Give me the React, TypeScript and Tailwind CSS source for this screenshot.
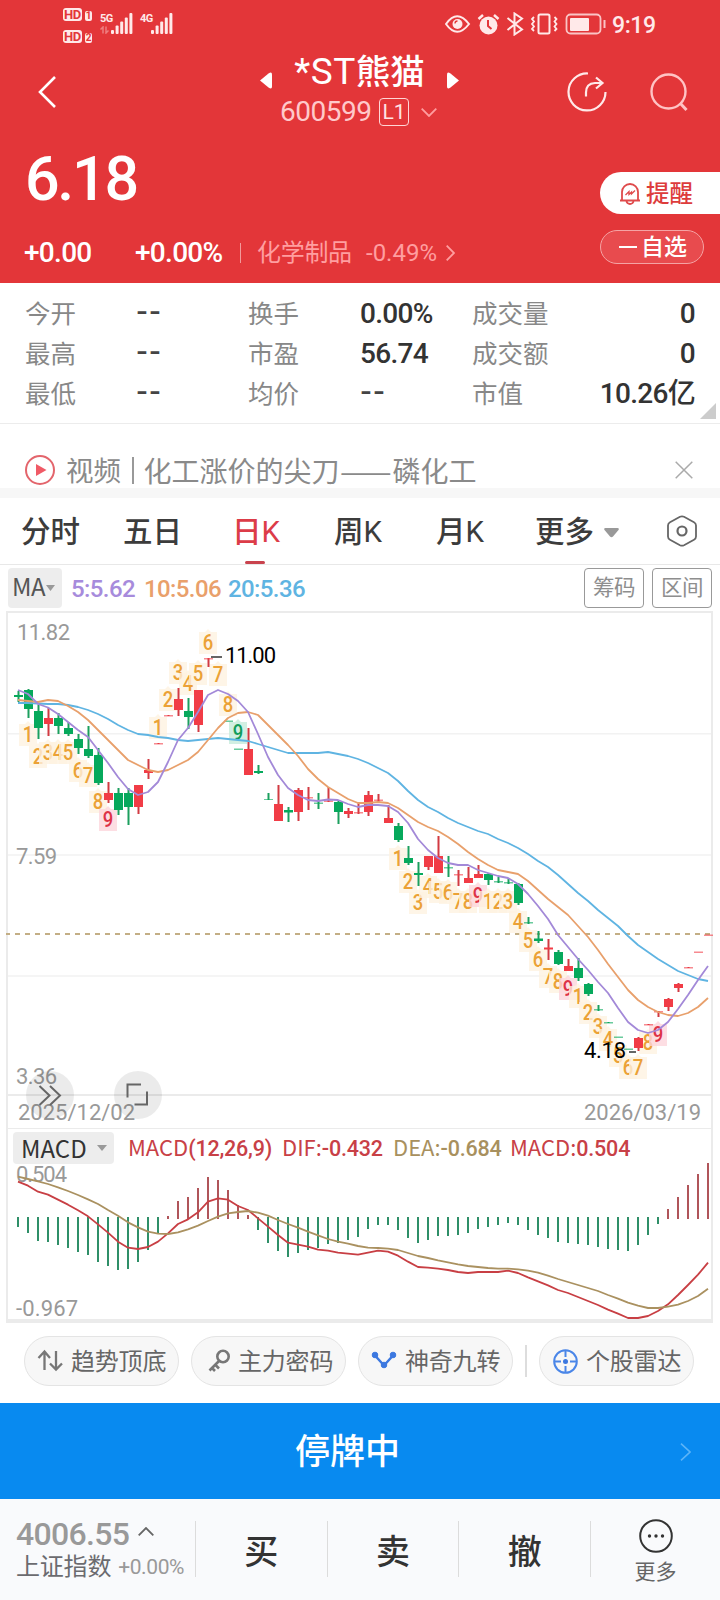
import type { ReactNode } from 'react'

type Candle = ['r' | 'g', number, number, number, number] | null
type Mark = [number, number, number, 'o' | 'r' | 'g']

const RED = '#f13c46'
const GREEN = '#06a95c'

// direction, body top, body bottom, high, low
const candles: Candle[] = [
  ['g', 695, 697, 691, 702], ['g', 690, 709, 689, 718], ['g', 711, 728, 705, 739], ['r', 718, 724, 708, 736],
  ['g', 718, 726, 713, 734], ['g', 728, 734, 722, 736], ['g', 739, 748, 734, 754], ['g', 749, 756, 726, 758],
  ['g', 755, 783, 748, 785], ['r', 793, 800, 782, 803], ['g', 793, 810, 788, 815], ['g', 793, 807, 788, 825],
  ['r', 785, 807, 785, 814], ['r', 770, 773, 759, 779], ['r', 743, 744.5, 743, 744], ['r', 715, 716.5, 715, 716],
  ['r', 699, 710, 688, 716], ['g', 711, 717, 698, 729], ['r', 690, 725, 690, 732], ['r', 658, 659.5, 658, 667],
  null, ['g', 720.5, 722, 721, 721], ['g', 748.5, 750, 749, 749], ['r', 749, 775, 728, 775],
  ['g', 771, 773, 765, 774], ['g', 799, 800, 793, 800], ['r', 804, 821, 785, 821], ['g', 810, 812.5, 807, 822],
  ['r', 790, 812, 788, 821], ['r', 797, 798.5, 787, 810], ['g', 802.5, 804, 793, 809], ['r', 800.5, 802, 787, 802],
  ['g', 802, 812, 801, 824], ['r', 811, 814, 808, 818], ['r', 812, 813.5, 803, 814], ['r', 795, 812, 791, 816],
  ['r', 799.5, 801, 794, 802], ['r', 818, 823, 805, 823], ['g', 826, 840, 823, 842], ['g', 858, 863, 846, 865],
  ['g', 873, 875, 862, 886], ['r', 856, 867, 856, 870], ['r', 856, 873, 836, 873], ['g', 867, 868.5, 856, 877],
  ['r', 874, 875.5, 870, 886], ['r', 878, 883, 867, 883], ['r', 874, 878, 865, 878], ['g', 874, 880, 873, 885],
  ['g', 881, 882.5, 877, 883], ['g', 882, 883.5, 878, 884], ['g', 884, 903, 883, 905], ['g', 922, 923.5, 917, 924],
  ['g', 938.5, 941, 931, 943], ['r', 947.5, 949.5, 939, 960], ['g', 952, 964, 950, 965], ['r', 966, 971, 959, 971],
  ['g', 968, 978, 958, 981], ['g', 984, 994, 983, 996], ['g', 1009, 1010.5, 1005, 1011], ['g', 1022, 1023.5, 1022, 1023],
  ['g', 1036.5, 1038, 1037, 1037], ['g', 1048.5, 1050, 1049, 1049], ['r', 1038, 1048, 1037, 1051],
  ['r', 1024, 1025.5, 1024, 1025], ['r', 1011, 1012.5, 1011, 1017], ['r', 999, 1007, 998, 1011],
  ['r', 984, 988, 983, 992], ['r', 967, 968.5, 967, 968], ['r', 951.5, 953, 952, 952], ['r', 934.5, 936, 935, 935],
]

const ma5 = [
  690, 694, 704, 707.5, 714, 722, 730, 737, 750, 763, 777, 789, 795, 792, 782, 762, 740, 728, 712, 695, 690, 694, 701, 712,
  734, 757, 775, 788, 795, 800, 801, 799.5, 800, 804, 807, 805, 805, 806, 812, 823, 839, 850, 858, 863, 865, 865, 870, 873,
  876, 878, 884, 894, 906, 919, 935, 947, 959, 970, 982, 993, 1008, 1022, 1030, 1033, 1030, 1022, 1009, 995, 980, 966,
]
const ma10 = [
  700, 701, 702, 700, 701, 706, 712, 720, 730, 740, 750, 760, 765, 770, 772, 770, 765, 760, 752, 740, 728, 718, 713, 712,
  715, 725, 735, 745, 756, 769, 779, 787, 793, 799, 803, 803, 802, 803, 808, 815, 822, 827, 831, 837, 844, 852, 859, 865,
  870, 872, 874, 881, 890, 899, 907, 915, 926, 937, 950, 964, 977, 990, 1000, 1007, 1012, 1015, 1016, 1013, 1007, 998,
]
const ma20 = [
  703, 703, 703.5, 704, 704, 705, 707, 710, 714, 719, 725, 730, 734, 735, 737, 738, 740, 741, 740, 739, 738, 739, 740, 741,
  744, 747, 750, 753, 753, 753, 753, 752, 754, 756, 759, 763, 768, 773, 781, 791, 800, 807, 812, 818, 823, 827, 831, 834,
  839, 843, 848, 854, 861, 867, 875, 884, 893, 901, 910, 918, 926, 936, 945, 952, 959, 965, 971, 975, 979, 981,
]

// candle index, label center, count, color
const marks: Mark[] = [
  [1, 734, 1, 'o'], [2, 756, 2, 'o'], [3, 752, 3, 'o'], [4, 752, 4, 'o'], [5, 752, 5, 'o'], [6, 770, 6, 'o'],
  [7, 775, 7, 'o'], [8, 801, 8, 'o'], [9, 819, 9, 'r'],
  [14, 727, 1, 'o'], [15, 699, 2, 'o'], [16, 672, 3, 'o'], [17, 683, 4, 'o'], [18, 673, 5, 'o'], [19, 642, 6, 'o'],
  [20, 674, 7, 'o'], [21, 704, 8, 'o'], [22, 732, 9, 'g'],
  [38, 858, 1, 'o'], [39, 881, 2, 'o'], [40, 902, 3, 'o'], [41, 886, 4, 'o'], [42, 891, 5, 'o'], [43, 892, 6, 'o'],
  [44, 901, 7, 'o'], [45, 901, 8, 'o'], [46, 895, 9, 'r'], [47, 901, 1, 'o'], [48, 901, 2, 'o'], [49, 901, 3, 'o'],
  [50, 921, 4, 'o'], [51, 940, 5, 'o'], [52, 959, 6, 'o'], [53, 976, 7, 'o'], [54, 981, 8, 'o'], [55, 988, 9, 'r'],
  [56, 996, 1, 'o'], [57, 1012, 2, 'o'], [58, 1026, 3, 'o'], [59, 1039, 4, 'o'], [60, 1055, 5, 'o'],
  [61, 1067, 6, 'o'], [62, 1067, 7, 'o'], [63, 1042, 8, 'o'], [64, 1034, 9, 'r'],
]

const markColors = {
  o: { box: '#fef2e0', text: '#eba136' },
  r: { box: '#fdd5db', text: '#dd3347' },
  g: { box: '#c5ebda', text: '#129c5b' },
}

// histogram tips, zero line sits at 1217
const hist = [
  1227, 1233, 1241, 1242, 1245, 1248, 1252, 1255, 1262, 1266, 1270, 1269, 1262, 1250, 1233, 1216, 1201, 1197, 1188, 1177,
  1180, 1190, 1205, 1215, 1230, 1243, 1251, 1257, 1253, 1250, 1248, 1244, 1243, 1240, 1237, 1229, 1225, 1225, 1230, 1238,
  1243, 1240, 1236, 1236, 1235, 1233, 1229, 1227, 1225, 1223, 1225, 1230, 1235, 1238, 1242, 1243, 1244, 1245, 1247, 1249,
  1250, 1251, 1245, 1235, 1224, 1209, 1197, 1185, 1174, 1163,
]

// both series are kept in thirds of a pixel below 1050
const dif = [
  395, 407, 425, 434, 449, 464, 481, 499, 523, 548, 575, 593, 597, 591, 575, 550, 522, 508, 487, 455, 445, 449, 468, 480,
  505, 530, 555, 578, 584, 590, 599, 602, 608, 611, 614, 608, 602, 605, 617, 635, 651, 653, 656, 660, 666, 669, 666, 666,
  666, 662, 669, 682, 694, 706, 720, 729, 741, 753, 765, 779, 791, 804, 804, 798, 783, 763, 735, 705, 674, 638,
]
const dea = [
  380, 387, 394, 402, 412, 423, 435, 448, 462, 480, 497, 517, 532, 545, 551, 552, 547, 538, 527, 513, 500, 490, 486, 483,
  488, 497, 510, 522, 533, 545, 556, 567, 575, 581, 588, 593, 594, 596, 600, 609, 618, 624, 631, 637, 643, 648, 651, 654,
  656, 656, 658, 662, 668, 677, 687, 696, 705, 714, 723, 735, 746, 758, 767, 774, 774, 770, 764, 753, 738, 716,
]

const xAt = (i: number) => 18 + i * 10
const toPoints = (values: number[]) => values.map((y, i) => `${xAt(i)},${y}`).join(' ')
const fromThirds = (values: number[]) => values.map((v) => 1050 + v / 3)

function Signal() {
  return (
    <svg className="w-[22px] h-[21px]" viewBox="0 0 22 21" fill="#ffe9e9">
      <rect x="0" y="17" width="3" height="4" rx="1" />
      <rect x="4.6" y="12.5" width="3" height="8.5" rx="1" />
      <rect x="9.2" y="8.5" width="3" height="12.5" rx="1" />
      <rect x="13.8" y="4.5" width="3" height="16.5" rx="1" />
      <rect x="18.4" y="0" width="3" height="21" rx="1" />
    </svg>
  )
}

function HdBadge({ n }: { n: string }) {
  return (
    <div className="flex items-end gap-[3px] h-[13px] text-[#e33639] font-bold leading-none">
      <span className="w-[19px] h-[13px] rounded-[3px] bg-[#ffe9e9] text-[13px] leading-[13px] text-center tracking-[-0.3px]">HD</span>
      <span className="w-[7px] h-[10px] rounded-[2px] bg-[#ffe9e9] text-[10px] leading-[10px] text-center">{n}</span>
    </div>
  )
}

function StatusBar() {
  return (
    <div className="flex h-12 text-[#ffe9e9]">
      <div className="flex flex-col gap-[9px] ml-[63px] mt-2 w-[30px]">
        <HdBadge n="1" />
        <HdBadge n="2" />
      </div>
      <div className="flex ml-[7px] mt-[13px]">
        <div className="flex flex-col w-[11px]">
          <span className="text-[11px] leading-[11px] font-bold tracking-[-0.5px]">5G</span>
          <svg className="w-[9px] h-2 mt-[2px] opacity-40" viewBox="0 0 9 8" fill="none" stroke="currentColor" strokeWidth="1.5">
            <path d="M.5 3.5L3 1v6.500M8.500 4.500L6 7V.5" />
          </svg>
        </div>
        <Signal />
        <span className="ml-[7px] w-[11px] text-[11px] leading-[11px] font-bold tracking-[-0.5px]">4G</span>
        <Signal />
      </div>
      <svg className="ml-[272px] mt-3 w-[162px] h-6" viewBox="445 12 162 24" fill="none" stroke="currentColor" strokeWidth="2">
        <path d="M446 24Q457 8.500 469 24Q457 39.500 446 24Z" />
        <circle cx="457.500" cy="24" r="5" fill="currentColor" stroke="none" />
        <path d="M455 23.500a2.500 2.500 0 0 1 2.500-2.500" stroke="#e33639" strokeWidth="1.300" />
        <circle cx="488.500" cy="25.500" r="9" fill="currentColor" stroke="none" />
        <path d="M478.500 19l4.500-4M498.500 19l-4.500-4" strokeWidth="2.500" />
        <path d="M488 20v6l3.500 3" stroke="#e33639" />
        <path d="M507.500 18l14.500 11.500-7.500 5V13.500l7.500 5L507.500 30" />
        <rect x="538.500" y="14.500" width="11" height="19" rx="1.500" />
        <path d="M534 17l-2 2 2 2.500-2 2.500 2 2.500-2 2.500 2 2M554.500 17l2 2-2 2.500 2 2.500-2 2.500 2 2.500-2 2" strokeWidth="1.800" />
        <rect x="566.500" y="14.500" width="34" height="19" rx="4" strokeWidth="1.800" opacity=".8" />
        <rect x="570" y="18" width="19" height="13" rx="1" fill="currentColor" stroke="none" />
        <path d="M604.500 20v8" opacity=".8" />
      </svg>
      <span className="ml-[5px] mt-[14px] text-[23px] leading-6 font-medium tracking-[-0.4px]">9:19</span>
    </div>
  )
}

function TitleBar() {
  return (
    <div className="flex h-[85px]">
      <div className="w-[240px]">
        <svg className="ml-[38px] mt-7 w-[18px] h-8" viewBox="0 0 18 32" fill="none" stroke="#fff" strokeWidth="2.600">
          <path d="M17 1L2 16l15 15" />
        </svg>
      </div>
      <div className="w-[240px]">
        <div className="flex items-center justify-center h-[46px] mt-[1px] pr-[1px]">
          <svg className="shrink-0 w-3 h-[17px] mt-4 mr-[22px]" viewBox="0 0 12 17" fill="#fff"><path d="M0 8.500L8.500 1.500Q12-1 12 2.500v12q0 3.500-3.500 1z" /></svg>
          <h1 className="text-white text-[34.500px] leading-[46px] font-medium whitespace-nowrap"><span className="font-normal text-[37px] tracking-[0.5px]">*ST</span>熊猫</h1>
          <svg className="shrink-0 w-3 h-[17px] mt-4 ml-[22px]" viewBox="0 0 12 17" fill="#fff"><path d="M12 8.500L3.500 1.500Q0-1 0 2.500v12q0 3.500 3.500 1z" /></svg>
        </div>
        <div className="flex items-center h-[34px] ml-[40px] text-[#ffc9ca]">
          <span className="text-[28px] leading-[34px] tracking-[-0.5px] w-[99px]">600599</span>
          <span className="w-[30px] h-7 rounded-[4px] border border-[#ffd5d5] text-[#ffe3e3] text-[21px] leading-[27px] text-center">L1</span>
          <svg className="ml-3 w-4 h-[9px]" viewBox="0 0 16 9" fill="none" stroke="#ff9d9f" strokeWidth="1.800"><path d="M.7.7L8 8l7.300-7.300" /></svg>
        </div>
      </div>
      <div className="flex w-[240px]">
        <svg className="ml-[87px] mt-6 w-10 h-10" viewBox="0 0 40 40" fill="none" stroke="#ffe9e9" strokeWidth="2.200">
          <path d="M21 1.500A18.500 18.500 0 1 0 38.500 20" />
          <path d="M19 24.500v-4q0-9 9-9.500h7M29 5.500l6.500 5.500-6.500 5.500" />
        </svg>
        <svg className="ml-[43px] mt-6 w-10 h-10" viewBox="0 0 40 40" fill="none" stroke="#ffc3c4" strokeWidth="2.400">
          <circle cx="18.500" cy="19.500" r="17" />
          <path d="M30 31l6.500 7" strokeWidth="3" />
        </svg>
      </div>
    </div>
  )
}

function PriceBlock() {
  return (
    <div className="flex h-[150px] text-white">
      <div className="w-[600px]">
        <div className="ml-[25px] mt-[10px] text-[61px] leading-[72px] font-medium tracking-[-2.300px]">6.18</div>
        <div className="flex items-center mt-[22px] h-8 text-[28px] leading-8 font-medium tracking-[-0.7px]">
          <span className="ml-[24px] w-[111px]">+0.00</span>
          <span className="w-[105px]">+0.00%</span>
          <span className="w-px h-5 bg-[#f29a9b]" />
          <span className="ml-4 w-[109px] text-[24px] font-normal text-[#ff9ea0] tracking-[-0.3px]">化学制品</span>
          <span className="text-[24px] text-[#ff9ea0] font-normal tracking-[0px]">-0.49%</span>
          <svg className="ml-[9px] w-[9px] h-4" viewBox="0 0 9 16" fill="none" stroke="#ff9ea0" strokeWidth="1.800"><path d="M.7.7L8 8 .7 15.300" /></svg>
        </div>
      </div>
      <div className="w-[120px]">
        <div className="flex items-center mt-[39px] h-[42px] rounded-l-full bg-white text-[#dd3c3c] pl-[19px]">
          <svg className="w-[22px] h-[23px]" viewBox="0 0 22 23" fill="none" stroke="#df4a4b" strokeWidth="1.800">
            <path d="M1 18.500h20M3 18V10a8 8 0 0 1 16 0v8M7.500 19a3.500 3 0 0 0 7 0" />
            <path d="M6.500 13l3.500-3.500v3l2.500-2.500v2l3.500-3.500" strokeWidth="1.300" />
          </svg>
          <span className="ml-[5px] pt-[1px] text-[23.500px] leading-10 font-medium">提醒</span>
        </div>
        <div className="flex items-center mt-4 h-[34px] w-[104px] rounded-full border border-[#f5a3a4] bg-[#e84b4e] pl-[18px]">
          <span className="w-[18px] h-[2px] bg-white" />
          <span className="ml-1 pt-[1px] text-[23px] leading-8 font-medium">自选</span>
        </div>
      </div>
    </div>
  )
}

const quotes = [
  ['今开', '--', '换手', '0.00%', '成交量', '0'],
  ['最高', '--', '市盈', '56.74', '成交额', '0'],
  ['最低', '--', '均价', '--', '市值', '10.26亿'],
]

function Value({ children }: { children: string }) {
  if (children === '--') {
    return <span className="pl-[1px] text-[36px] leading-none tracking-[3px] text-[#444]">--</span>
  }
  return <span className="text-[28px] font-medium tracking-[-0.7px] text-[#333]">{children}</span>
}

function Quotes() {
  return (
    <section className="relative h-[141px] border-b border-[#ececec] pt-[11px] px-[25px]">
      {quotes.map(([a, av, b, bv, c, cv]) => (
        <div key={a} className="flex h-10 leading-10 text-[25.500px] text-[#888]">
          <span className="w-[111px]">{a}</span>
          <span className="w-[112px]"><Value>{av}</Value></span>
          <span className="w-[112px]">{b}</span>
          <span className="w-[112px]"><Value>{bv}</Value></span>
          <span className="w-[112px]">{c}</span>
          <span className="flex-1 text-right whitespace-nowrap"><Value>{cv}</Value></span>
        </div>
      ))}
      <svg className="absolute right-1 bottom-1 w-4 h-4" viewBox="0 0 16 16" fill="#ccc"><path d="M16 0v16H0z" /></svg>
    </section>
  )
}

function NewsStrip() {
  return (
    <section className="flex items-center h-[74px] border-b-[10px] border-[#f7f7f7] pt-[28px] whitespace-nowrap text-[#8a8a8a]">
      <svg className="ml-[25px] w-[30px] h-[30px] shrink-0" viewBox="0 0 30 30">
        <circle cx="15" cy="15" r="14" fill="none" stroke="#e3656c" strokeWidth="2" />
        <path d="M11 9v12l10.500-6z" fill="#f05a66" />
      </svg>
      <span className="ml-[11px] pt-[3px] text-[27.500px] leading-[33px]">视频</span>
      <span className="ml-[11px] w-[1.500px] h-[27px] bg-[#999]" />
      <span className="ml-[10px] pt-[1px] font-[Noto_Sans_CJK_SC] text-[28px] leading-[33px]">化工涨价的尖刀<span className="inline-block origin-left scale-x-110 mr-[6px]">——</span>磷化工</span>
      <svg className="ml-auto mr-[27px] w-[18px] h-[18px]" viewBox="0 0 18 18" stroke="#aaa" strokeWidth="1.500"><path d="M.7.7l16.600 16.600M17.300.7L.7 17.300" /></svg>
    </section>
  )
}

function Tab({ children, className = '' }: { children: ReactNode; className?: string }) {
  return <span className={`text-[29.500px] leading-[68px] shrink-0 whitespace-nowrap ${className}`}>{children}</span>
}

function K() {
  return <span className="font-normal">K</span>
}

function Tabs() {
  return (
    <nav className="flex h-[67px] border-b border-[#e8e8e8] text-[#3c3c3c] font-medium">
      <Tab className="ml-[21px] w-[102px]">分时</Tab>
      <Tab className="w-[109px]">五日</Tab>
      <div className="relative w-[102px]">
        <Tab className="text-[#dc3c48]">日<K /></Tab>
        <span className="absolute left-[13px] bottom-0 w-5 h-[3px] rounded-full bg-[#c9434d]" />
      </div>
      <Tab className="w-[102px]">周<K /></Tab>
      <Tab className="w-[99px]">月<K /></Tab>
      <Tab>更多</Tab>
      <svg className="ml-[10px] mt-[30px] w-[15px] h-[10px]" viewBox="0 0 15 10" fill="#999"><path d="M1.500 0h12q2 .3 1 2L9 8.500q-1.500 1.500-3 0L.5 2q-1-1.700 1-2z" /></svg>
      <svg className="ml-auto mr-[23px] mt-[17px] w-[30px] h-8" viewBox="0 0 30 32" fill="none" stroke="#666" strokeWidth="1.800">
        <path d="M13 1.800q2-1 4 0l10 5.400q2 1.100 2 3.300v11q0 2.200-2 3.300l-10 5.400q-2 1-4 0L3 24.800q-2-1.100-2-3.300v-11q0-2.200 2-3.300z" />
        <circle cx="15" cy="16" r="4.500" strokeWidth="2.200" />
      </svg>
    </nav>
  )
}

function MaRow() {
  return (
    <div className="flex h-[46px] pt-[3px] text-[24px] leading-[42px] tracking-[-0.6px] font-medium">
      <div className="flex items-center ml-2 w-[54px] h-10 rounded-[4px] bg-[#ededed] text-[#555] pl-[4px] font-normal">
        <span className="font-[Noto_Sans_CJK_SC] text-[24px] leading-9 pb-[4px]">MA</span>
        <svg className="ml-[1px] w-[9px] h-[6px]" viewBox="0 0 9 6" fill="#999"><path d="M0 0h9L4.500 6z" /></svg>
      </div>
      <span className="ml-[9px] w-[73px] text-[#a78bdc]">5:5.62</span>
      <span className="w-[84px] text-[#e9a06b]">10:5.06</span>
      <span className="text-[#5fb4e2]">20:5.36</span>
      <span className="ml-auto w-[60px] h-10 rounded-[4px] border border-[#999] text-center text-[21.500px] leading-[37px] font-normal text-[#8e8e8e]">筹码</span>
      <span className="ml-2 mr-2 w-[60px] h-10 rounded-[4px] border border-[#999] text-center text-[21.500px] leading-[37px] font-normal text-[#8e8e8e]">区间</span>
    </div>
  )
}

function MarkLabel({ mark }: { mark: Mark }) {
  const [i, y, n, kind] = mark
  const x = xAt(i)
  const c = markColors[kind]
  return (
    <g>
      <path d={`M${x - 9} ${y - 10}h6l3-3 3 3h6v22h-18z`} fill={c.box} opacity=".78" />
      <text x={x} y={y + 7.5} textAnchor="middle" fontSize="22" fontWeight="500" fill={c.text} textLength="10.5" lengthAdjust="spacingAndGlyphs">{n}</text>
    </g>
  )
}

function CandleShape({ candle, index }: { candle: Candle; index: number }) {
  if (!candle) return null
  const [dir, top, bottom, high, low] = candle
  const x = xAt(index)
  const flat = bottom - top < 2
  return (
    <g fill={dir === 'r' ? RED : GREEN}>
      <rect x={x - 1} y={high} width="2" height={low - high} fill={dir === 'r' ? '#d23a42' : '#1c9f5e'} />
      <rect x={x - 4.5} y={top} width="9" height={bottom - top} opacity={flat ? 0.6 : 1} />
    </g>
  )
}

function PriceChart() {
  return (
    <svg className="block w-[703px] h-[481px] overflow-visible" viewBox="8 613 703 481">
      <path d="M8 733.700h703M8 855h703M8 976h703" stroke="#f2f2f2" strokeWidth="1.500" />
      <path d="M6 934h706" stroke="#c3ae85" strokeWidth="1.800" strokeDasharray="5 5" strokeDashoffset="1" />
      {marks.map((m) => <MarkLabel key={m[0]} mark={m} />)}
      <g transform="translate(.5 0)">
        {candles.map((c, i) => <CandleShape key={i} candle={c} index={i} />)}
      </g>
      <g fill="none" strokeWidth="1.800" strokeLinejoin="round">
        <polyline points={toPoints(ma20)} stroke="#5fb4e2" />
        <polyline points={toPoints(ma10)} stroke="#e8a06c" />
        <polyline points={toPoints(ma5)} stroke="#a389d8" />
      </g>
      <path d="M211 657h11M629 1052h7" stroke="#666" strokeWidth="1.800" />
      <g fontSize="22" fill="#999">
        <text x="17" y="640" textLength="53">11.82</text>
        <text x="16" y="864" textLength="41">7.59</text>
        <text x="16" y="1084" textLength="41">3.36</text>
      </g>
      <g fontSize="22" fill="#000">
        <text x="225" y="663" textLength="51">11.00</text>
        <text x="584" y="1058" textLength="42">4.18</text>
      </g>
    </svg>
  )
}

function Num({ children }: { children: string }) {
  return <span className="font-[Roboto] font-medium text-[21.500px] tracking-[-0.2px]">{children}</span>
}

function MacdHeader() {
  return (
    <div className="flex h-[38px] pt-[3px] font-[Noto_Sans_CJK_SC] text-[22px] leading-[29px] whitespace-nowrap text-[#c84046]">
      <div className="flex items-center ml-[5px] w-[101px] h-8 rounded-[4px] bg-[#ededed] pl-[8px] pb-[1px] text-[#333] text-[24px] shrink-0">
        MACD
        <svg className="ml-auto mr-[7px] w-[10px] h-[6px]" viewBox="0 0 10 6" fill="#999"><path d="M0 0h10L5 6z" /></svg>
      </div>
      <span className="ml-[14px] w-[154px]">MACD<Num>(12,26,9)</Num></span>
      <span className="w-[111px]">DIF:<Num>-0.432</Num></span>
      <span className="w-[117px] text-[#a8905e]">DEA:<Num>-0.684</Num></span>
      <span>MACD:<Num>0.504</Num></span>
    </div>
  )
}

function MacdChart() {
  return (
    <svg className="block w-[703px] h-[152px] overflow-visible" viewBox="8 1167 703 152">
      {hist.map((y, i) =>
        y > 1217 ? (
          <rect key={i} x={xAt(i) - 1} y="1217" width="2" height={y - 1217} fill="#2f8f68" />
        ) : (
          <rect key={i} x={xAt(i) - 1} y={y} width="2" height={Math.max(1219 - y, 2)} fill="#b0555a" />
        ),
      )}
      <g fontSize="22" fill="#999">
        <text x="16" y="1182" textLength="51">0.504</text>
        <text x="16" y="1316" textLength="62">-0.967</text>
      </g>
      <g fill="none" strokeWidth="1.800" strokeLinejoin="round">
        <polyline points={toPoints(fromThirds(dif))} stroke="#c83f44" />
        <polyline points={toPoints(fromThirds(dea))} stroke="#aa9160" />
      </g>
    </svg>
  )
}

function Charts() {
  return (
    <section className="relative ml-[6px] mr-[7px] border-2 border-b-[4px] border-[#ebebeb]">
      <div className="absolute left-[18px] top-[458px] w-12 h-12 rounded-full bg-black/8" />
      <div className="absolute left-[106px] top-[458px] w-12 h-12 rounded-full bg-black/8" />
      <PriceChart />
      <div className="flex justify-between h-[35px] border-t-2 border-b border-[#ebebeb] px-[10px] text-[22px] leading-[34px] text-[#999]">
        <span>2025/12/02</span>
        <span>2026/03/19</span>
      </div>
      <MacdHeader />
      <MacdChart />
      <svg className="absolute left-[30px] top-[470px] w-6 h-6" viewBox="0 0 24 24" fill="none" stroke="#666" strokeWidth="2"><path d="M1.500 3l10 9.500-10 9.500M12 3l10 9.500L12 22" /></svg>
      <svg className="absolute left-[117px] top-[469px] w-6 h-6" viewBox="0 0 24 24" fill="none" stroke="#666" strokeWidth="2"><path d="M2.500 15.500V2.500h13.500M9.500 22.500h12.500V9.500" /></svg>
    </section>
  )
}

function Chip({ icon, children }: { icon: ReactNode; children: string }) {
  return (
    <div className="flex items-center w-[155px] h-[50px] rounded-full border border-[#e4e4e4] bg-[#f7f7f7] pl-[12px] text-[24px] leading-[48px] tracking-[-0.2px] text-[#666] whitespace-nowrap">
      {icon}
      <span className="ml-[8px] mt-[2px]">{children}</span>
    </div>
  )
}

function Tools() {
  return (
    <section className="flex h-[80px] pt-[13px] pl-6">
      <Chip icon={<svg className="w-[26px] h-6 shrink-0" viewBox="0 0 26 24" fill="none" stroke="#777" strokeWidth="2.300"><path d="M7.500 21V3M1.500 9l6-6.500L13 9M19 2v18.500M13 14.500l6 6 6-6" /></svg>}>趋势顶底</Chip>
      <div className="w-3" />
      <Chip icon={
        <svg className="ml-1 w-[23px] h-6 mr-[-1px] shrink-0" viewBox="0 0 23 24" fill="none" stroke="#777" strokeWidth="2.600">
          <circle cx="15" cy="7.500" r="5.700" />
          <path d="M11 12L1.500 21.500M7 15.500l4 4M3.500 18.500l3.500 3.500" />
        </svg>
      }>主力密码</Chip>
      <div className="w-3" />
      <Chip icon={
        <svg className="w-[26px] h-6 shrink-0" viewBox="0 0 26 24" fill="#3c78e0" stroke="#3c78e0">
          <path d="M4 6.500l9 10 9-10" fill="none" strokeWidth="2.500" />
          <circle cx="4" cy="6" r="2.800" />
          <circle cx="22" cy="6" r="2.800" />
          <circle cx="13" cy="16" r="2.800" />
        </svg>
      }>神奇九转</Chip>
      <div className="mx-3 mt-[9px] w-[2px] h-8 bg-[#ddd]" />
      <Chip icon={
        <svg className="ml-[1px] w-[25px] h-[25px] shrink-0" viewBox="0 0 25 25" fill="none" stroke="#4a86e8" strokeWidth="2">
          <circle cx="12.500" cy="12.500" r="11.300" />
          <path d="M12.500 1v7M12.500 17v7M1 12.500h7M17 12.500h7" />
          <circle cx="12.500" cy="12.500" r="2.500" fill="#3c78e0" stroke="none" />
        </svg>
      }>个股雷达</Chip>
    </section>
  )
}

function Suspended() {
  return (
    <div className="relative flex items-center justify-center h-24 bg-[#088af0] pt-[4px] pr-[25px] text-white text-[35px] font-medium">
      停牌中
      <svg className="absolute right-[29px] top-[40px] w-[11px] h-[18px]" viewBox="0 0 11 18" fill="none" stroke="#5cb4f8" strokeWidth="1.600"><path d="M1 .7L10 9l-9 8.300" /></svg>
    </div>
  )
}

function TradeButton({ children }: { children: string }) {
  return (
    <div className="flex-1 flex items-center justify-center border-l border-[#dcdcdc] pt-[6px] text-[34px] font-medium text-[#333]">
      {children}
    </div>
  )
}

function BottomBar() {
  return (
    <footer className="flex h-[101px] bg-[#f9fafc]">
      <div className="w-[195px] pl-4 pt-[17px] whitespace-nowrap">
        <div className="flex items-center h-9 text-[32px] leading-9 font-medium tracking-[-0.7px] text-[#999]">
          4006.55
          <svg className="ml-[9px] mb-[5px] w-4 h-[9px]" viewBox="0 0 16 9" fill="none" stroke="#666" strokeWidth="1.800"><path d="M.7 8.300L8 1l7.300 7.300" /></svg>
        </div>
        <div className="flex items-center h-[30px] text-[24px] leading-[30px] tracking-[-0.2px] text-[#6b6b6f]">
          上证指数
          <span className="ml-[7px] text-[21px] tracking-[-0.4px] text-[#999]">+0.00%</span>
        </div>
      </div>
      <div className="flex w-[396px] h-14 mt-[22px] border-r border-[#dcdcdc]">
        <TradeButton>买</TradeButton>
        <TradeButton>卖</TradeButton>
        <TradeButton>撤</TradeButton>
      </div>
      <div className="flex-1 flex flex-col items-center">
        <svg className="mt-[20px] w-[34px] h-[34px]" viewBox="0 0 34 34" fill="#333">
          <circle cx="17" cy="17" r="15.800" fill="none" stroke="#333" strokeWidth="2" />
          <circle cx="10.500" cy="17" r="1.700" />
          <circle cx="17" cy="17" r="1.700" />
          <circle cx="23.500" cy="17" r="1.700" />
        </svg>
        <span className="mt-[4px] text-[21px] leading-[30px] text-[#666]">更多</span>
      </div>
    </footer>
  )
}

export default function App() {
  return (
    <div className="w-[720px] h-[1600px] overflow-hidden bg-white font-['Roboto','Noto_Sans_CJK_SC',sans-serif]">
      <header className="h-[283px] bg-[#e33639]">
        <StatusBar />
        <TitleBar />
        <PriceBlock />
      </header>
      <Quotes />
      <NewsStrip />
      <Tabs />
      <MaRow />
      <Charts />
      <Tools />
      <Suspended />
      <BottomBar />
    </div>
  )
}
